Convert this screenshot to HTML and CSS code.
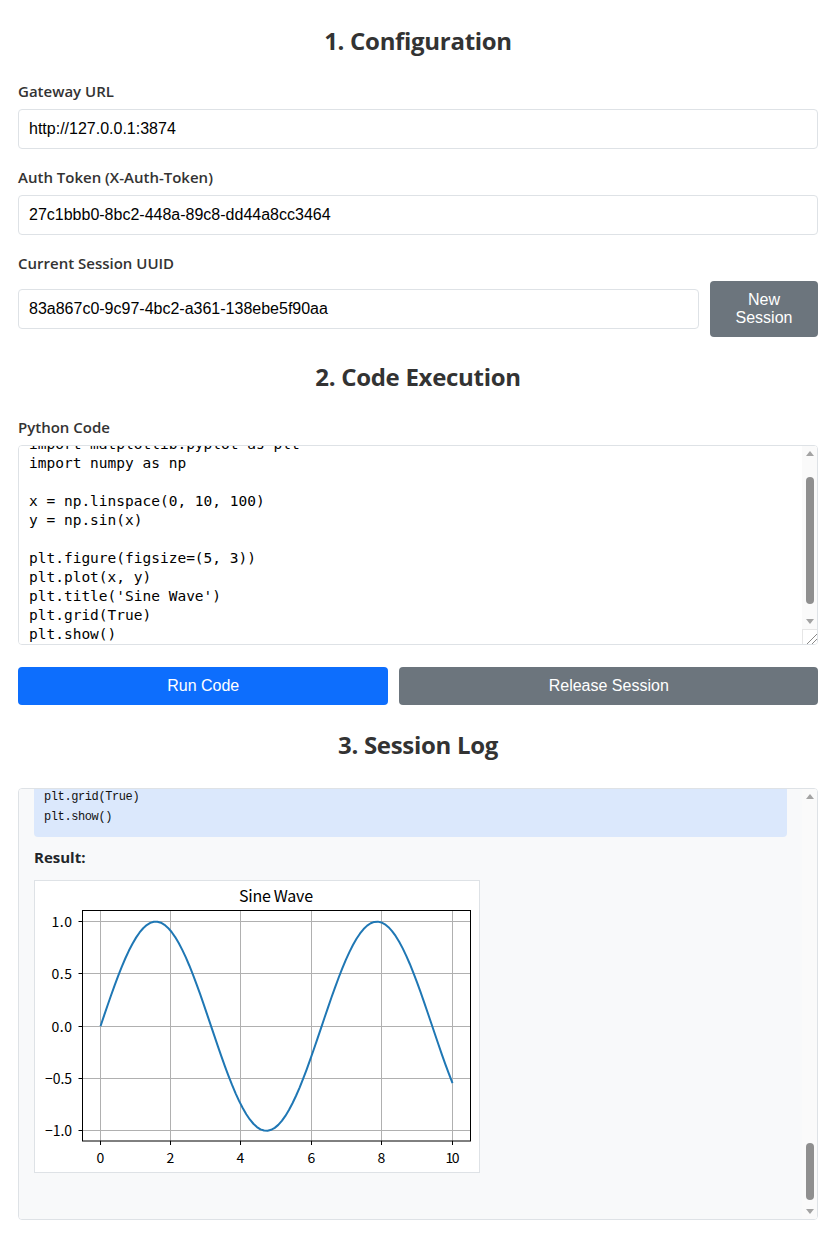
FILE: index.html
```html
<!DOCTYPE html>
<html lang="en">
<head>
<meta charset="utf-8">
<title>Code Gateway Client</title>
<link rel="stylesheet" href="styles.css">
</head>
<body>
<svg class="defs" width="0" height="0" aria-hidden="true">
  <defs>
    <symbol id="sine-plot" viewBox="0 0 444 291">
      <rect width="444" height="291" fill="#fff"/>
      <text class="plot-title" x="241" y="21" textLength="74" lengthAdjust="spacing">Sine Wave</text>
      <g class="grid">
        <line x1="65.5" y1="29.5" x2="65.5" y2="260"/>
        <line x1="135.5" y1="29.5" x2="135.5" y2="260"/>
        <line x1="205.5" y1="29.5" x2="205.5" y2="260"/>
        <line x1="276.5" y1="29.5" x2="276.5" y2="260"/>
        <line x1="346.5" y1="29.5" x2="346.5" y2="260"/>
        <line x1="417.5" y1="29.5" x2="417.5" y2="260"/>
        <line x1="47.5" y1="40.5" x2="435.5" y2="40.5"/>
        <line x1="47.5" y1="92.5" x2="435.5" y2="92.5"/>
        <line x1="47.5" y1="145.5" x2="435.5" y2="145.5"/>
        <line x1="47.5" y1="197.5" x2="435.5" y2="197.5"/>
        <line x1="47.5" y1="249.5" x2="435.5" y2="249.5"/>
      </g>
      <path id="sine-line" class="sine-line" d=""/>
      <rect class="axes" x="47.5" y="29.5" width="388" height="230.5"/>
      <g class="ticks">
        <line x1="65.5" y1="260" x2="65.5" y2="264"/>
        <line x1="135.5" y1="260" x2="135.5" y2="264"/>
        <line x1="205.5" y1="260" x2="205.5" y2="264"/>
        <line x1="276.5" y1="260" x2="276.5" y2="264"/>
        <line x1="346.5" y1="260" x2="346.5" y2="264"/>
        <line x1="417.5" y1="260" x2="417.5" y2="264"/>
        <line x1="43.5" y1="40.5" x2="47.5" y2="40.5"/>
        <line x1="43.5" y1="92.5" x2="47.5" y2="92.5"/>
        <line x1="43.5" y1="145.5" x2="47.5" y2="145.5"/>
        <line x1="43.5" y1="197.5" x2="47.5" y2="197.5"/>
        <line x1="43.5" y1="249.5" x2="47.5" y2="249.5"/>
      </g>
      <g class="xlabels">
        <text x="65.5" y="282">0</text>
        <text x="135.5" y="282">2</text>
        <text x="205.5" y="282">4</text>
        <text x="276.5" y="282">6</text>
        <text x="346.5" y="282">8</text>
        <text x="417.5" y="282" textLength="14" lengthAdjust="spacing">10</text>
      </g>
      <g class="ylabels">
        <text x="37" y="45.5" textLength="20.5" lengthAdjust="spacing">1.0</text>
        <text x="37" y="97.5" textLength="20.5" lengthAdjust="spacing">0.5</text>
        <text x="37" y="150.5" textLength="20.5" lengthAdjust="spacing">0.0</text>
        <text x="37" y="202.5" textLength="27" lengthAdjust="spacing">&#8722;0.5</text>
        <text x="37" y="254.5" textLength="27" lengthAdjust="spacing">&#8722;1.0</text>
      </g>
    </symbol>
  </defs>
</svg>

<main class="container">
  <section class="section">
    <h2 class="section-title">1. Configuration</h2>
    <div class="field">
      <label class="field-label" for="gateway">Gateway URL</label>
      <input class="text-input" id="gateway" type="text" value="http://127.0.0.1:3874">
    </div>
    <div class="field">
      <label class="field-label" for="token">Auth Token (X-Auth-Token)</label>
      <input class="text-input" id="token" type="text" value="27c1bbb0-8bc2-448a-89c8-dd44a8cc3464">
    </div>
    <div class="field field-last">
      <label class="field-label" for="session">Current Session UUID</label>
      <div class="session-row">
        <input class="text-input session-input" id="session" type="text" value="83a867c0-9c97-4bc2-a361-138ebe5f90aa">
        <button class="btn btn-secondary btn-new" type="button">New Session</button>
      </div>
    </div>
  </section>

  <section class="section">
    <h2 class="section-title">2. Code Execution</h2>
    <div class="field field-last">
      <label class="field-label" for="code">Python Code</label>
      <div class="scroll-wrap">
        <textarea class="code-input" id="code" spellcheck="false">import matplotlib.pyplot as plt
import numpy as np

x = np.linspace(0, 10, 100)
y = np.sin(x)

plt.figure(figsize=(5, 3))
plt.plot(x, y)
plt.title('Sine Wave')
plt.grid(True)
plt.show()</textarea>
        <div class="vscroll vscroll-code" aria-hidden="true">
          <span class="vscroll-arrow vscroll-up"></span>
          <span class="vscroll-thumb"></span>
          <span class="vscroll-arrow vscroll-down"></span>
        </div>
        <div class="resize-corner" aria-hidden="true"></div>
      </div>
    </div>
    <div class="actions">
      <button class="btn btn-primary" type="button">Run Code</button>
      <button class="btn btn-secondary" type="button">Release Session</button>
    </div>
  </section>

  <section class="section">
    <h2 class="section-title">3. Session Log</h2>
    <div class="scroll-wrap log-wrap">
      <div class="log" id="log">
        <div class="log-info">[10:42:07] Session created: 83a867c0-9c97-4bc2-a361-138ebe5f90aa</div>

        <div class="log-entry">
          <div class="log-meta">[10:42:15] Executing code...</div>
          <pre class="log-code">print("Hello from the sandbox!")
import sys
print(sys.version)</pre>
          <div class="log-label">Result:</div>
          <pre class="log-output">Hello from the sandbox!
3.11.9 (main, Apr  2 2024, 08:25:04) [GCC 12.2.0]</pre>
        </div>

        <div class="log-entry">
          <div class="log-meta">[10:43:02] Executing code...</div>
          <pre class="log-code">import numpy as np

data = np.arange(12).reshape(3, 4)
print(data)
print("sum:", data.sum())
print("mean:", data.mean(axis=0))</pre>
          <div class="log-label">Result:</div>
          <pre class="log-output">[[ 0  1  2  3]
 [ 4  5  6  7]
 [ 8  9 10 11]]
sum: 66
mean: [4. 5. 6. 7.]</pre>
        </div>

        <div class="log-entry">
          <div class="log-meta">[10:44:40] Executing code...</div>
          <pre class="log-code">import math
values = [math.sqrt(n) for n in range(1, 6)]
for v in values:
    print(round(v, 4))</pre>
          <div class="log-label">Result:</div>
          <pre class="log-output">1.0
1.4142
1.7321
2.0
2.2361</pre>
        </div>

        <div class="log-entry">
          <div class="log-meta">[10:45:18] Executing code...</div>
          <pre class="log-code">import matplotlib.pyplot as plt
import numpy as np

x = np.linspace(0, 10, 100)
y = np.sin(x)

plt.figure(figsize=(5, 3))
plt.plot(x, y)
plt.title('Sine Wave')
plt.grid(True)
plt.show()</pre>
          <div class="log-label">Result:</div>
          <div class="log-figure"><svg class="plot" width="444" height="291"><use href="#sine-plot"/></svg></div>
        </div>

        <div class="log-entry">
          <div class="log-meta">[10:47:51] Executing code...</div>
          <pre class="log-code">import matplotlib.pyplot as plt
import numpy as np

x = np.linspace(0, 10, 100)
y = np.sin(x)

plt.figure(figsize=(5, 3))
plt.plot(x, y)
plt.title('Sine Wave')
plt.grid(True)
plt.show()</pre>
          <div class="log-label">Result:</div>
          <div class="log-figure"><svg class="plot" width="444" height="291"><use href="#sine-plot"/></svg></div>
        </div>
      </div>
      <div class="vscroll vscroll-log" aria-hidden="true">
        <span class="vscroll-arrow vscroll-up"></span>
        <span class="vscroll-thumb"></span>
        <span class="vscroll-arrow vscroll-down"></span>
      </div>
    </div>
  </section>
</main>
<script src="script.js"></script>
</body>
</html>
```

FILE: styles.css
```css
* {
  box-sizing: border-box;
}

html,
body {
  margin: 0;
  padding: 0;
  background: #fff;
}

body {
  font-family: "Open Sans", "Noto Sans", sans-serif;
  color: #333;
}

.defs {
  display: block;
  width: 0;
  height: 0;
  overflow: hidden;
}

.container {
  width: 800px;
  margin-left: 18px;
  padding-top: 1px;
  padding-bottom: 16px;
}

.section-title {
  margin: 25px 0 25px;
  font-size: 24px;
  line-height: 30px;
  font-weight: 700;
  letter-spacing: -0.3px;
  text-align: center;
  color: #333;
}

.field {
  margin-bottom: 18px;
}

.field-last {
  margin-bottom: 0;
}

.field-label {
  display: block;
  margin-bottom: 8px;
  font-size: 15px;
  line-height: 20px;
  font-weight: 600;
  color: #333;
}

.text-input {
  display: block;
  width: 100%;
  height: 40px;
  padding: 0 10px;
  border: 1px solid #dee2e6;
  border-radius: 4px;
  background: #fff;
  font: 16px "Liberation Sans", Arial, sans-serif;
  color: #000;
}

.session-row {
  display: flex;
  align-items: center;
  gap: 11px;
}

.session-input {
  flex: 1 1 auto;
  width: auto;
}

.btn {
  border: 0;
  border-radius: 4px;
  color: #fff;
  font: 16px/18px "Liberation Sans", Arial, sans-serif;
  cursor: pointer;
}

.btn-primary {
  background: #0d6efd;
}

.btn-secondary {
  background: #6c757d;
}

.btn-new {
  flex: 0 0 108px;
  height: 56px;
  padding: 0 20px;
}

/* wrappers that hold a drawn scrollbar over their content */
.scroll-wrap {
  position: relative;
}

.code-input {
  display: block;
  width: 100%;
  height: 200px;
  padding: 10px 26px 10px 10px;
  border: 1px solid #dee2e6;
  border-radius: 4px;
  background: #fff;
  font: 14.5px/19px "DejaVu Sans Mono", monospace;
  color: #000;
  resize: none;
  overflow-y: scroll;
  scrollbar-width: none;
}

.vscroll {
  position: absolute;
  top: 1px;
  right: 1px;
  width: 15px;
  background: #fafafa;
}

.vscroll-code {
  bottom: 16px;
  border-top-right-radius: 3px;
}

.vscroll-log {
  bottom: 1px;
  border-radius: 0 3px 3px 0;
}

.vscroll-thumb {
  position: absolute;
  left: 3.5px;
  width: 8px;
  border-radius: 4px;
  background: #8f8f8f;
}

.vscroll-code .vscroll-thumb {
  top: 31px;
  height: 127px;
}

.vscroll-log .vscroll-thumb {
  top: 354px;
  height: 57px;
}

.vscroll-arrow {
  position: absolute;
  left: 3.5px;
  width: 0;
  height: 0;
  border-left: 4px solid transparent;
  border-right: 4px solid transparent;
}

.vscroll-up {
  top: 5px;
  border-bottom: 5px solid #a3a3a3;
}

.vscroll-down {
  bottom: 5px;
  border-top: 5px solid #a3a3a3;
}

.resize-corner {
  position: absolute;
  right: 1px;
  bottom: 1px;
  width: 15px;
  height: 15px;
  border-top: 1px solid #e6e6e6;
  border-left: 1px solid #e6e6e6;
  border-bottom-right-radius: 3px;
  background:
    linear-gradient(135deg, transparent 62%, #8a8a8a 62%, #8a8a8a 67%, transparent 67%, transparent 79%, #8a8a8a 79%, #8a8a8a 84%, transparent 84%),
    #fff;
}

.actions {
  display: flex;
  gap: 11px;
  margin-top: 22px;
}

.actions .btn {
  flex: 1 1 auto;
  height: 38px;
  padding: 0 6px;
}

.log-wrap {
  margin-top: 28px;
}

.log {
  height: 432px;
  overflow-y: scroll;
  scrollbar-width: none;
  padding: 15px 30px 15px 15px;
  background: #f8f9fa;
  border: 1px solid #dee2e6;
  border-radius: 4px;
}

.log-info {
  font-size: 13px;
  line-height: 20px;
  color: #6c757d;
  padding-bottom: 16px;
}

.log-entry {
  padding-bottom: 31px;
}

.log-meta {
  font-size: 13px;
  line-height: 20px;
  color: #6c757d;
  margin-bottom: 6px;
}

.log-code {
  margin: 0 0 10px;
  padding: 10px;
  border-radius: 4px;
  background: #dbe8fc;
  font: 12px/20px "Liberation Mono", monospace;
  letter-spacing: -0.4px;
  color: #111;
  white-space: pre;
}

.log-label {
  margin-bottom: 13px;
  font-size: 15px;
  line-height: 20px;
  font-weight: 700;
  color: #212529;
}

.log-output {
  margin: 0;
  padding: 10px;
  border: 1px solid #dee2e6;
  border-radius: 4px;
  background: #fff;
  font: 12px/20px "Liberation Mono", monospace;
  color: #111;
}

.log-figure {
  display: inline-block;
  vertical-align: top;
  border: 1px solid #dee2e6;
  background: #fff;
}

.plot {
  display: block;
}

.plot-title {
  font-family: "Noto Sans CJK SC", "DejaVu Sans", sans-serif;
  font-size: 16px;
  text-anchor: middle;
  fill: #000;
}

.grid line {
  stroke: #b0b0b0;
  stroke-width: 1;
}

.sine-line {
  fill: none;
  stroke: #1f77b4;
  stroke-width: 2;
  stroke-linejoin: round;
  stroke-linecap: butt;
}

.axes {
  fill: none;
  stroke: #000;
  stroke-width: 1;
}

.ticks line {
  stroke: #000;
  stroke-width: 1;
}

.xlabels text,
.ylabels text {
  font-family: "Noto Sans CJK SC", "DejaVu Sans", sans-serif;
  font-size: 14px;
  fill: #000;
}

.xlabels text {
  text-anchor: middle;
}

.ylabels text {
  text-anchor: end;
}
```

FILE: script.js
```js
(function () {
  var line = document.getElementById('sine-line');
  var parts = [];
  for (var i = 0; i < 100; i++) {
    var t = (10 * i) / 99;
    var x = 65.5 + t * 35.2;
    var y = 145.2 - Math.sin(t) * 104.6;
    parts.push((i ? 'L' : 'M') + x.toFixed(2) + ' ' + y.toFixed(2));
  }
  line.setAttribute('d', parts.join(' '));

  var code = document.getElementById('code');
  code.scrollTop = 21;

  var log = document.getElementById('log');
  log.scrollTop = log.scrollHeight;
})();
```
